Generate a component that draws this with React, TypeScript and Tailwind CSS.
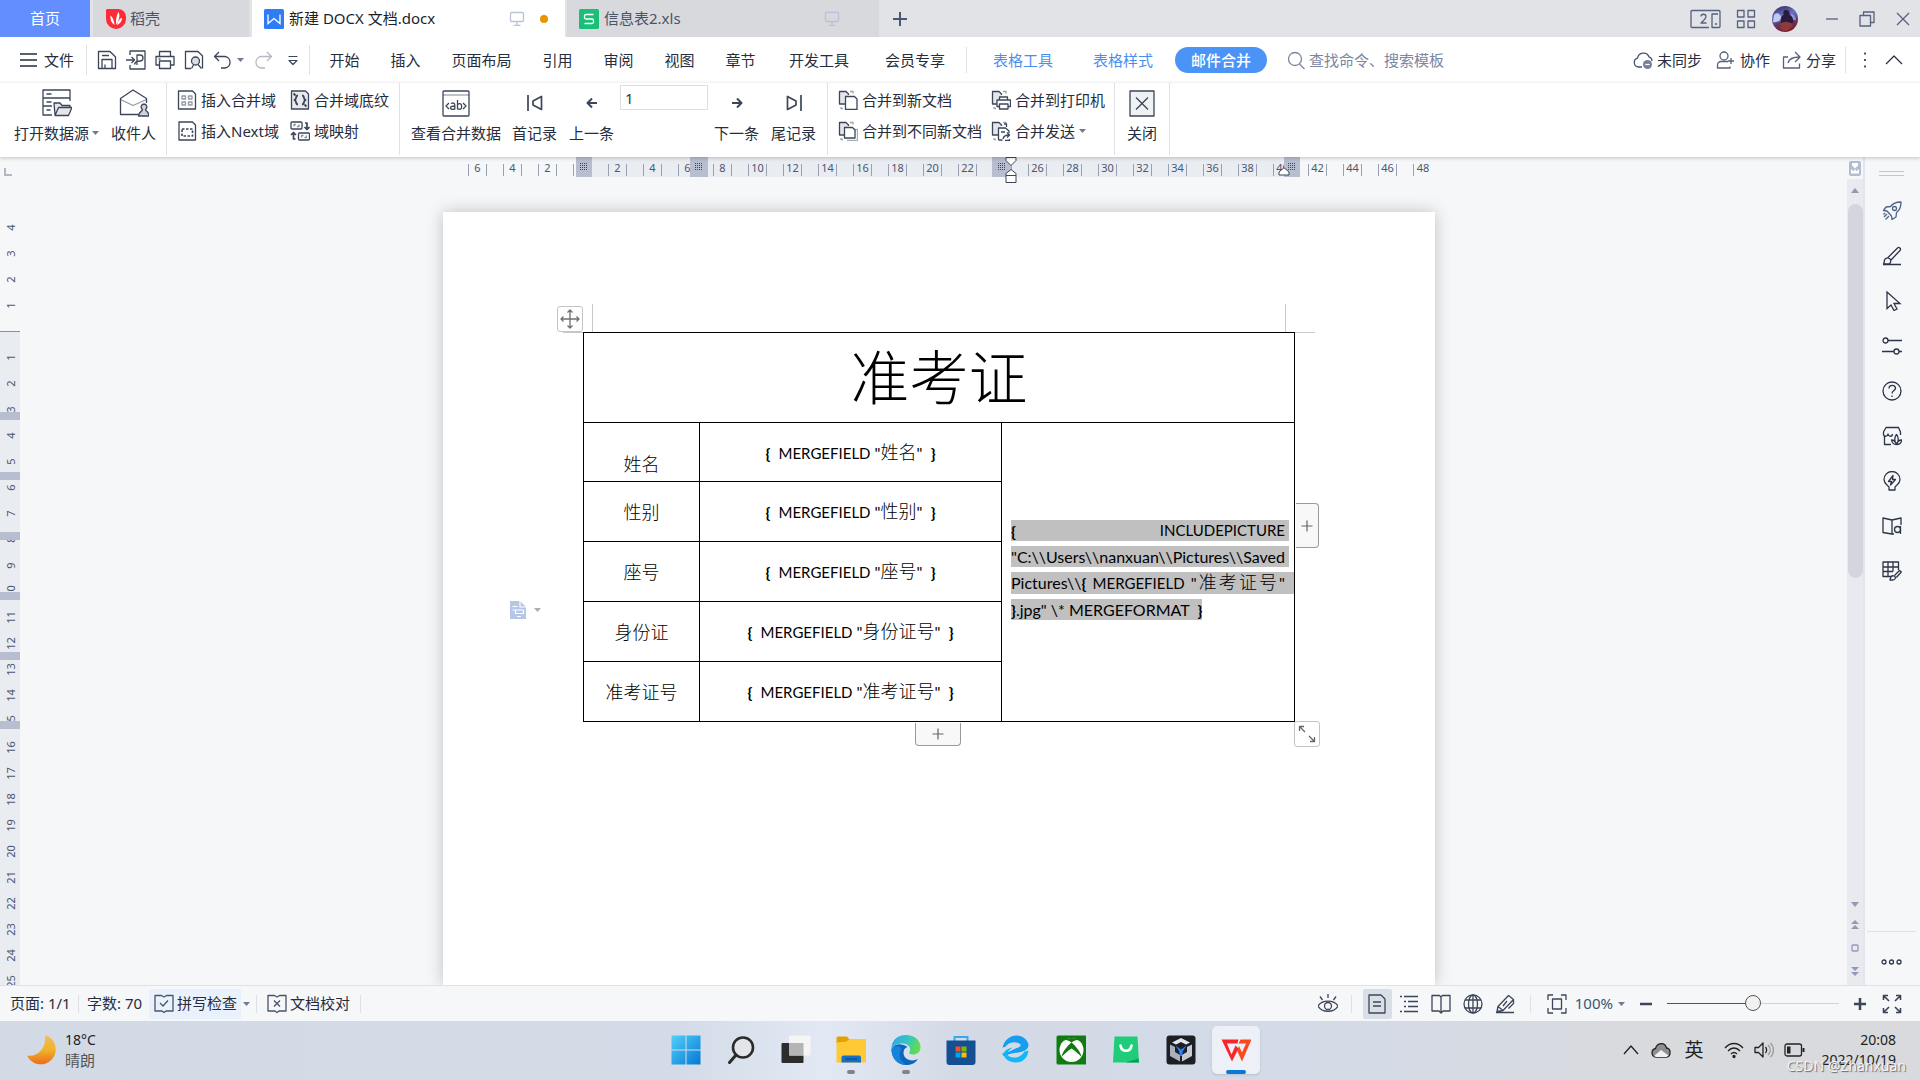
import type { ReactNode } from "react";
import clsx from "clsx";

type SvgProps = {
  size?: number;
  width?: number;
  height?: number;
  box?: string;
  stroke?: number;
  className?: string;
  children: ReactNode;
};

// Thin outlined icon on a 20x20 grid by default.
function Svg({
  size = 20,
  width,
  height,
  box = "0 0 20 20",
  stroke = 1.3,
  className = "",
  children,
}: SvgProps) {
  return (
    <svg
      width={width ?? size}
      height={height ?? size}
      viewBox={box}
      fill="none"
      stroke="currentColor"
      strokeWidth={stroke}
      strokeLinejoin="round"
      className={clsx("shrink-0", className)}
      aria-hidden="true"
    >
      {children}
    </svg>
  );
}

function Caret({ className = "" }: { className?: string }) {
  return (
    <svg width="7" height="4" viewBox="0 0 7 4" className={clsx("shrink-0 text-[#6f7b94]", className)} aria-hidden="true">
      <path d="M0 0h7L3.5 4z" fill="currentColor" />
    </svg>
  );
}

function Divider({ className = "" }: { className?: string }) {
  return <span className={clsx("w-px shrink-0 bg-[#dfe1e6]", className)} />;
}

/* ---------- title bar ---------- */

const MonitorIcon = () => (
  <Svg size={16} box="0 0 16 16" className="text-[#b9c2d8]">
    <rect x="1.5" y="1.5" width="13" height="9" rx="1" />
    <path d="M8 10.5v3.5M4.5 14.3h7" />
  </Svg>
);

function TitleBar() {
  return (
    <header className="flex h-[37px] shrink-0 bg-[#e2e3e7] text-[15px]">
      <button className="w-[90px] bg-[#628eff] text-white">首页</button>
      <button className="ml-[3px] flex w-[156px] items-center bg-[#d8d9dd] pl-[13px] text-[#4b5368]">
        <Svg size={20} stroke={0}>
          <path d="M1 0h11a8 8 0 0 1 8 8v2a10 10 0 0 1-10 10A10 10 0 0 1 0 10V1z" fill="#fb2c36" />
          <path d="M12.5 3c2 4 .5 8-2.5 13 0-5 0-9 2.5-13zM4.5 6.5c2.500 2 3.500 5 4 9.500-3-2-4.500-5-4-9.500zM16 8.500c0 4-2 6-5 7.500.5-3 2-5.500 5-7.500z" fill="#fff" />
        </Svg>
        <span className="ml-1">稻壳</span>
      </button>
      <button className="ml-[3px] flex w-[313px] items-center bg-white px-3 text-[#1a1f2b]">
        <Svg size={20}>
          <rect width="20" height="20" rx="1.5" fill="#2f7df6" stroke="none" />
          <path d="M4 5.500v9l6-5 6 5v-9" stroke="#fff" strokeLinejoin="miter" />
        </Svg>
        <span className="ml-[5px]">新建 DOCX 文档.docx</span>
        <span className="ml-auto flex items-center gap-[15px] pr-[5px]">
          <MonitorIcon />
          <span className="size-2 rounded-full bg-[#e99700]" />
        </span>
      </button>
      <button className="ml-[2px] flex w-[312px] items-center bg-[#d8d9dd] px-3 text-[#4b5368]">
        <Svg size={20}>
          <rect width="20" height="20" rx="1.5" fill="#19bf78" stroke="none" />
          <path d="M14.500 5.500H7a1.500 1.500 0 0 0-1.500 1.500v1.500A1.500 1.500 0 0 0 7 10h6a1.500 1.500 0 0 1 1.500 1.500V13a1.500 1.500 0 0 1-1.500 1.500H5.500" stroke="#fff" />
        </Svg>
        <span className="ml-[5px]">信息表2.xls</span>
        <span className="ml-auto pr-[27px]">
          <MonitorIcon />
        </span>
      </button>
      <button className="ml-[13px] text-[#4a5674]" aria-label="新建标签">
        <Svg size={16} box="0 0 16 16" stroke={2}>
          <path d="M8 1v14M1 8h14" />
        </Svg>
      </button>

      <div className="ml-auto flex items-center pr-[10px] text-[#56617d]">
        <button aria-label="多屏">
          <Svg width={31} height={20} box="0 0 31 20">
            <path d="M19 18.500H2a1 1 0 0 1-1-1V2.500a1 1 0 0 1 1-1h27a1 1 0 0 1 1 1v15a1 1 0 0 1-1 1h-7V5h6" />
            <path d="M11 7.500c0-3 5-3 5 0 0 2-2.500 4-5 6.500h5.500M25 15h2" />
          </Svg>
        </button>
        <button className="ml-[15px]" aria-label="应用">
          <Svg size={20}>
            <rect x="1.5" y="1.5" width="6.5" height="6.5" />
            <rect x="12" y="1.5" width="6.5" height="6.5" />
            <rect x="1.5" y="12" width="6.5" height="6.5" />
            <rect x="12" y="12" width="6.5" height="6.5" />
          </Svg>
        </button>
        <button className="ml-4" aria-label="账号">
          <svg width="26" height="26" viewBox="0 0 26 26" aria-hidden="true">
            <defs>
              <linearGradient id="sky" x1="0" y1="0" x2="0.3" y2="1">
                <stop offset="0" stopColor="#2c2450" />
                <stop offset="0.45" stopColor="#6a73c9" />
                <stop offset="0.7" stopColor="#5a3b72" />
                <stop offset="1" stopColor="#7d1f2a" />
              </linearGradient>
            </defs>
            <circle cx="13" cy="13" r="13" fill="url(#sky)" />
            <path d="M2 9c2-3 6-2 7 2 0 4-4 6-8 5z" fill="#d5e4ff" opacity=".8" />
            <path d="M19 8c3 0 5 3 5 6-2 1-4-1-5-3z" fill="#9fb4f0" opacity=".7" />
            <path d="M14 4c3 0 4 2 3.500 5 3 1 4 4 3.500 8H9c0-4 0-7 2.500-8C11 6 11.500 4 14 4z" fill="#2a1a3c" />
            <path d="M8 18c4-3 9-3 13 1-2 4-6 6-9 6-3-1-4-4-4-7z" fill="#8d3a3c" />
          </svg>
        </button>
        <Divider className="ml-3 h-6 bg-[#cfd2d9]" />
        <button className="ml-[14px]" aria-label="最小化">
          <Svg size={14} box="0 0 14 14"><path d="M1 7h12" /></Svg>
        </button>
        <button className="ml-5" aria-label="还原">
          <Svg size={16} box="0 0 16 16">
            <rect x="1" y="4.5" width="10.5" height="10.5" />
            <path d="M4.500 4.500V1H15v10.500h-3.500" />
          </Svg>
        </button>
        <button className="ml-[21px]" aria-label="关闭窗口">
          <Svg size={14} box="0 0 14 14"><path d="M1 1l12 12M13 1L1 13" /></Svg>
        </button>
      </div>
    </header>
  );
}

/* ---------- menu row ---------- */

const MENU_TABS = [
  { label: "开始", width: "w-[61px]" },
  { label: "插入", width: "w-[61px]" },
  { label: "页面布局", width: "w-[91px]" },
  { label: "引用", width: "w-[61px]" },
  { label: "审阅", width: "w-[61px]" },
  { label: "视图", width: "w-[61px]" },
  { label: "章节", width: "w-[61px]" },
  { label: "开发工具", width: "w-[96px]" },
  { label: "会员专享", width: "w-[96px]" },
];

const QUICK_ACTIONS = [
  {
    label: "保存",
    icon: (
      <>
        <path d="M1.500 1.500H13l5.500 5.500v11.500h-17z" />
        <path d="M5 18.500v-9h10v9M5 5.500h7" />
        <path d="M8 18.500v-4" />
      </>
    ),
  },
  {
    label: "输出为PDF",
    icon: (
      <>
        <path d="M4 5V1h15v18H4v-4" />
        <path d="M0 10h8M5.500 7l3 3-3 3" />
        <path d="M11 15V5h3a2.800 2.800 0 0 1 0 6c-3 0-5 1-5.500 3.500" />
      </>
    ),
  },
  {
    label: "打印",
    icon: (
      <>
        <path d="M4.500 6V1.500h11V6" />
        <path d="M4.500 15H1V6.500h18V15h-3.500" />
        <rect x="4.5" y="11" width="11" height="7.5" />
        <path d="M3.500 9h2" />
      </>
    ),
  },
  {
    label: "打印预览",
    icon: (
      <>
        <path d="M7 18.500H1.500v-17H14l4.500 4.500v12.500" />
        <circle cx="11.5" cy="11" r="4" fill="#d9dde5" />
        <path d="M9.500 15l-2 3.500M14 14.500l3.500 4" />
      </>
    ),
  },
];

function MenuBar() {
  return (
    <nav className="flex h-[46px] shrink-0 items-center bg-white text-[15px] text-[#262d3d]">
      <button className="ml-5 flex w-[66px] items-center">
        <Svg width={17} height={14} box="0 0 17 14"><path d="M0 1h17M0 7h17M0 13h17" /></Svg>
        <span className="ml-[7px]">文件</span>
      </button>
      <Divider className="h-[30px]" />
      <div className="ml-[10px] flex items-center gap-[9px] text-[#3d4659]">
        {QUICK_ACTIONS.map(({ label, icon }) => (
          <button key={label} aria-label={label}>
            <Svg>{icon}</Svg>
          </button>
        ))}
        <button className="flex items-center gap-1" aria-label="撤销">
          <Svg>
            <path d="M6 2L1.500 6.500 6 11M2 6.500h10a5.800 5.800 0 0 1 0 11.500H8" />
          </Svg>
          <Caret />
        </button>
        <button className="text-[#b4b9c4]" aria-label="恢复">
          <Svg>
            <path d="M14 2l4.500 4.500L14 11M18 6.500H8A5.800 5.800 0 0 0 8 18h4" />
          </Svg>
        </button>
        <button className="ml-1" aria-label="更多">
          <Svg size={14} box="0 0 14 14" stroke={1.2}><path d="M2.500 3.500h9M3 7.500h8L7 11.500z" /></Svg>
        </button>
      </div>
      <Divider className="ml-[9px] h-[30px]" />
      <div className="ml-1 flex">
        {MENU_TABS.map(({ label, width }) => (
          <button key={label} className={width}>{label}</button>
        ))}
      </div>
      <Divider className="ml-[3px] h-[26px]" />
      <button className="ml-[6px] w-[100px] text-[#4a8ff0]">表格工具</button>
      <button className="w-[100px] text-[#4a8ff0]">表格样式</button>
      <button className="ml-[2px] h-[26px] w-[92px] rounded-full bg-[#4b93f7] font-medium text-white">邮件合并</button>
      <label className="ml-5 flex items-center text-[#7b86a0]">
        <Svg size={19} box="0 0 19 19">
          <circle cx="8" cy="8" r="6.5" />
          <path d="M12.500 13l5 5" />
        </Svg>
        <input
          className="ml-[3px] w-40 bg-transparent outline-none placeholder:text-[#7b86a0]"
          placeholder="查找命令、搜索模板"
          aria-label="查找命令"
        />
      </label>

      <div className="ml-auto flex items-center pr-[17px] text-[#262d3d]">
        <button className="flex items-center gap-1">
          <Svg className="text-[#48536c]">
            <path d="M9 17H5.500a4.500 4.500 0 0 1-1-8.800A6 6 0 0 1 16 6.800a4.500 4.500 0 0 1 3 4.200" />
            <circle cx="14.5" cy="14.5" r="4.5" fill="#74809b" stroke="none" />
            <path d="M12.300 14.500h4.400" stroke="#fff" />
          </Svg>
          未同步
        </button>
        <button className="ml-[14px] flex items-center gap-1">
          <Svg className="text-[#56617d]">
            <circle cx="8" cy="6" r="4" />
            <path d="M12 11.500H5A3.500 3.500 0 0 0 1.500 15v3H14v-1.500M15 8v6M12 11h6" />
          </Svg>
          协作
        </button>
        <button className="ml-3 flex items-center gap-1">
          <Svg className="text-[#56617d]">
            <path d="M13 2l5 5-5 5M17.500 7C11 7 7 9 6 13M6 7H1.500v11h16v-4.500" />
          </Svg>
          分享
        </button>
        <Divider className="ml-[9px] h-[26px]" />
        <button className="ml-[17px]" aria-label="更多选项">
          <Svg width={4} height={18} box="0 0 4 18" stroke={0}>
            <path d="M1 1.500h2v2H1zM1 8h2v2H1zM1 14.500h2v2H1z" fill="#48536c" />
          </Svg>
        </button>
        <button className="ml-[18px]" aria-label="折叠功能区">
          <Svg width={18} height={10} box="0 0 18 10" stroke={1.2}><path d="M1 9l8-8 8 8" /></Svg>
        </button>
      </div>
    </nav>
  );
}

/* ---------- ribbon ---------- */

function BigButton({ label, icon, caret = false }: { label: string; icon: ReactNode; caret?: boolean }) {
  return (
    <button className="flex flex-col items-center">
      <span className="flex h-10 items-center justify-center text-[#3d4659]">{icon}</span>
      <span className="flex h-5 items-center gap-[3px] whitespace-nowrap">
        {label}
        {caret && <Caret />}
      </span>
    </button>
  );
}

function RowButton({ label, icon, caret = false }: { label: string; icon: ReactNode; caret?: boolean }) {
  return (
    <button className="flex h-[30px] items-center gap-1 whitespace-nowrap">
      <Svg className="text-[#3d4659]">{icon}</Svg>
      {label}
      {caret && <Caret />}
    </button>
  );
}

const pageStack = (
  <>
    <path d="M7 14H1.500V1.500H8l2.500 2.500V5" fill="#e4e6eb" />
    <path d="M12 1.500h3v2M3 17v1.500h2" opacity=".5" />
  </>
);

function Ribbon() {
  return (
    <section className="relative z-10 flex h-[74px] shrink-0 bg-white text-[15px] text-[#262d3d] shadow-[0_1px_4px_rgba(0,0,0,0.22)]">
      <div className="flex gap-3 pl-[14px]">
        <BigButton
          label="打开数据源"
          caret
          icon={
            <Svg width={30} height={28} box="0 0 30 28">
              <path d="M10 26H1V1h27v11M1 9h27M1 17h9M4.500 5h5M4.500 13h5M4.500 21h4" />
              <path d="M13 26l-1-12h6l2 2.500h8V19M13 26.500l3.500-8H30l-3.500 8z" fill="#e4e6eb" />
            </Svg>
          }
        />
        <BigButton
          label="收件人"
          icon={
            <Svg width={30} height={28} box="0 0 30 28">
              <path d="M20 25.500H1.500V9.500L14 1l13.500 8.500V14" />
              <path d="M1.500 10.500l12.500 6 13.500-6" opacity=".55" />
              <path d="M25 15a3 3 0 0 0-1.500 5.500c0 2-4 2-4 6.500h10.500c0-4.500-3.500-4.500-3.500-6.500A3 3 0 0 0 25 15z" fill="#cfd3db" />
            </Svg>
          }
        />
      </div>
      <Divider className="ml-[10px] h-[72px]" />
      <div className="ml-[10px] grid grid-cols-[113px_99px] content-start gap-y-[1px] pt-[2px]">
        <RowButton
          label="插入合并域"
          icon={
            <>
              <path d="M1.500 1h14l3 3v15h-17z" />
              <path d="M5 6h3.500v3H5zM11.500 6H15v3h-3.500zM5 12h3.500v3H5zM11.500 12H15v3h-3.500z" opacity=".55" />
            </>
          }
        />
        <RowButton
          label="合并域底纹"
          icon={
            <>
              <path d="M1.500 1h14l3 3v15h-17z" fill="#e8eaee" />
              <path d="M8 5.500C5 5.500 7 9.500 4.500 10 7 10.500 5 14.500 8 14.500M12 5.500c3 0 1 4 3.500 4.500-2.500.5-.5 4.500-3.500 4.500M3.500 3.500l2 2M14.500 14.500l2 2" strokeWidth="1.8" />
            </>
          }
        />
        <RowButton
          label="插入Next域"
          icon={
            <>
              <path d="M2 1h13.500l3 3v15H2z" />
              <rect x="5" y="8" width="10.5" height="7" strokeDasharray="2.5 1.5" strokeWidth="1.6" />
            </>
          }
        />
        <RowButton
          label="域映射"
          icon={
            <>
              <rect x="1" y="1" width="11" height="7" rx="1" />
              <rect x="8.5" y="12" width="11" height="7" rx="1" />
              <path d="M4 5.500V3.500h2M9 3.500v2H7M11.500 16.500v-2h2M16.500 14.500v2h-2" opacity=".6" />
              <path d="M15 2h2v6M14.500 6L17 8.500 19.500 6M5.500 18h-2v-6M1 14l2.500-2.500L6 14" strokeWidth="1.7" />
            </>
          }
        />
      </div>
      <Divider className="ml-[10px] h-[72px]" />
      <div className="flex pl-[11px]">
        <BigButton
          label="查看合并数据"
          icon={
            <Svg width={28} height={27} box="0 0 28 27">
              <rect x="1" y="1" width="26" height="25" rx="1" />
              <path d="M1 5h26" opacity=".5" />
              <path d="M7 13l-3 3 3 3M21 13l3 3-3 3" />
              <path d="M9 13.500c3-1.200 3.800 0 3.800 1.500v4.500M12.800 16c-4 0-4.300 1.200-4.300 2s2.500 2.500 4.300.5M15.500 10v9.500M15.500 15c1-2 4.200-2 4.200 1.500s-3.200 3.500-4.200 1.500" />
            </Svg>
          }
        />
        <span className="w-[11px]" />
        <BigButton
          label="首记录"
          icon={
            <Svg size={18} box="0 0 18 18" stroke={1.7}>
              <path d="M2 1v16M15.500 2.500v13L7 11V7z" />
            </Svg>
          }
        />
        <span className="w-3" />
        <BigButton
          label="上一条"
          icon={<Svg size={14} box="0 0 14 14" stroke={2}><path d="M12 7H3M7 2.500L2.500 7 7 11.500" /></Svg>}
        />
        <input
          className="mx-[6px] mt-[2px] h-[25px] w-[88px] border border-[#dcdee3] pl-1 text-[#30384a] outline-none"
          defaultValue="1"
          aria-label="记录编号"
        />
        <BigButton
          label="下一条"
          icon={<Svg size={14} box="0 0 14 14" stroke={2}><path d="M2 7h9M7 2.500L11.500 7 7 11.500" /></Svg>}
        />
        <span className="w-3" />
        <BigButton
          label="尾记录"
          icon={
            <Svg size={18} box="0 0 18 18" stroke={1.7}>
              <path d="M16 1v16M2.500 2.500v13L11 11V7z" />
            </Svg>
          }
        />
      </div>
      <Divider className="ml-[11px] h-[72px]" />
      <div className="ml-[10px] grid grid-cols-[153px_114px] content-start gap-y-[1px] pt-[2px]">
        <RowButton label="合并到新文档" icon={<>{pageStack}<path d="M7.500 6.500h9l2.500 2.500v10.500H7.500z" fill="#fff" /></>} />
        <RowButton
          label="合并到打印机"
          icon={
            <>
              {pageStack}
              <path d="M8.500 10V7h8v3M8 16.500H6V10h13.500v6.500H17" fill="#fff" />
              <rect x="8.5" y="14" width="8.5" height="5" fill="#fff" />
            </>
          }
        />
        <RowButton
          label="合并到不同新文档"
          icon={
            <>
              {pageStack}
              <path d="M9 8.500h10.500V19.500H9" opacity=".45" />
              <path d="M6.500 6.500h8L17 9v8H6.500z" fill="#fff" />
            </>
          }
        />
        <RowButton
          label="合并发送"
          caret
          icon={
            <>
              {pageStack}
              <path d="M13 3h2.500v3M7.500 19V7h7l3.500 3v2M7.500 19h4M10 11h4" fill="#fff" />
              <path d="M12 18c.5-3 3-4 6-4M16 11.500l2.500 2.500L16 16.500M18.500 18v1.500H14" />
            </>
          }
        />
      </div>
      <Divider className="ml-[9px] h-[72px]" />
      <div className="px-3">
        <BigButton
          label="关闭"
          icon={
            <Svg width={26} height={27} box="0 0 26 27">
              <rect x="1" y="1" width="24" height="25" fill="#f0f1f3" />
              <path d="M7 7.500l12 12M19 7.500l-12 12" />
            </Svg>
          }
        />
      </div>
      <Divider className="h-[72px]" />
    </section>
  );
}

/* ---------- rulers ---------- */

const H_MARKS = [6, 4, 2, 0, ...Array.from({ length: 24 }, (_, i) => (i + 1) * 2)];

// Column boundary markers on the ruler, measured from the page's left edge.
const H_BLOCKS = [
  { left: 133, width: 16 },
  { left: 247, width: 18 },
  { left: 549, width: 19 },
  { left: 841, width: 16 },
];

// Row boundary markers, measured from the top margin.
const V_BLOCKS = [80, 140, 200, 260, 320, 389];

function DotGrid() {
  return (
    <svg width="8" height="8" viewBox="0 0 8 8" aria-hidden="true">
      {[0, 2, 4, 6].map((y) =>
        [0, 2, 4, 6].map((x) => <rect key={`${x}-${y}`} x={x} y={y} width="1" height="1" fill="#3d4659" />),
      )}
    </svg>
  );
}

function HorizontalRuler() {
  return (
    <div className="flex h-5 shrink-0">
      <Svg size={8} box="0 0 8 8" stroke={2} className="mt-[11px] ml-1 text-[#b3b9c4]">
        <path d="M1 0v7h7" strokeLinejoin="miter" />
      </Svg>
      <div className="flex flex-1 justify-center pl-[19px]">
        <div className="relative flex w-[992px] pl-[17px] text-[11px] text-[#4b5671]">
          <span className="absolute top-0 left-[133px] h-5 w-[724px] bg-[#e9ecf1]" />
          {H_MARKS.map((n, i) => (
            <span key={i} className="relative flex w-[35px] shrink-0 justify-center pt-[7px]">
              <span
                className={clsx(
                  "flex h-3 w-[19px] items-start justify-center border-l border-[#98a1b4] leading-[7px]",
                  n !== 48 && "border-r",
                )}
              >
                {n || ""}
              </span>
            </span>
          ))}
          {H_BLOCKS.map((b) => (
            <span
              key={b.left}
              className="absolute top-0 flex h-5 items-center justify-center bg-[#b7bed0]"
              style={{ left: b.left, width: b.width }}
            >
              <DotGrid />
            </span>
          ))}
          <svg width="12" height="26" viewBox="0 0 12 26" className="absolute top-0 left-[562px] text-[#3d4659]" aria-hidden="true">
            <path d="M1 .500h10v3L6 8.500 1 3.500zM6 12.500l5 4v2H1v-2zM1 18.500h10v7H1z" fill="#fff" stroke="currentColor" />
          </svg>
          <svg width="12" height="9" viewBox="0 0 12 9" className="absolute top-[10px] left-[835px] text-[#3d4659]" aria-hidden="true">
            <path d="M6 .700l5 4.300v3H1V5z" fill="#fff" stroke="currentColor" />
          </svg>
        </div>
      </div>
    </div>
  );
}

function VerticalMark({ n }: { n: number }) {
  return (
    <span className="flex h-[26px] shrink-0 items-center justify-center">
      <span className="-rotate-90">{n}</span>
    </span>
  );
}

function VerticalRuler() {
  return (
    <div className="flex w-5 shrink-0 flex-col overflow-hidden pt-[37px] text-[11px] leading-[11px] text-[#4b5671]">
      {[4, 3, 2, 1].map((n) => (
        <VerticalMark key={n} n={n} />
      ))}
      <div className="relative mt-[13px] flex min-h-0 flex-1 flex-col border-t border-[#8590a8] bg-[#e9ecf1] pt-3">
        {Array.from({ length: 25 }, (_, i) => (
          <VerticalMark key={i} n={i + 1} />
        ))}
        {V_BLOCKS.map((top) => (
          <span key={top} className="absolute left-0 h-2 w-5 bg-[#b7bed0]" style={{ top }} />
        ))}
      </div>
    </div>
  );
}

/* ---------- document ---------- */

const FIELDS = [
  { label: "姓名", field: "姓名" },
  { label: "性别", field: "性别" },
  { label: "座号", field: "座号" },
  { label: "身份证", field: "身份证号" },
  { label: "准考证号", field: "准考证号" },
];

function MergeField({ name }: { name: string }) {
  return (
    <span className="whitespace-pre">
      <b>{"{"}</b>
      {"  "}
      <span className="text-[15px]">MERGEFIELD</span> &quot;
      <span className="text-[18px] font-light">{name}</span>&quot;{"  "}
      <b>{"}"}</b>
    </span>
  );
}

function AdmissionTable() {
  return (
    <table className="w-[712px] table-fixed border-collapse text-center text-[16px] leading-[22px] text-black">
      <colgroup>
        <col className="w-[116px]" />
        <col className="w-[302px]" />
        <col />
      </colgroup>
      <tbody>
        <tr className="h-[90px]">
          <th colSpan={3} className="border border-black text-[59px] leading-[70px] font-light">
            准考证
          </th>
        </tr>
        {FIELDS.map(({ label, field }, i) => (
          <tr key={label} className={i === 0 ? "h-[59px]" : "h-[60px]"}>
            <td className={clsx("border border-black text-[18px] font-light", i === 0 && "pt-6")}>{label}</td>
            <td className="border border-black">
              <MergeField name={field} />
            </td>
            {i === 0 && (
              <td rowSpan={5} className="border border-black pb-1 pl-[9px] text-left">
                <div className="flex flex-col items-start gap-[5px] leading-[21px]">
                  <span className="flex w-[278px] justify-between bg-[#c0c0c0] pr-1">
                    <b>{"{"}</b>
                    <span className="text-[15px]">INCLUDEPICTURE</span>
                  </span>
                  <span className="w-[278px] bg-[#c0c0c0]">&quot;C:\\Users\\nanxuan\\Pictures\\Saved</span>
                  <span className="w-full bg-[#c0c0c0] pr-[9px] [text-align-last:justify]">
                    Pictures\\<b>{"{"}</b> <span className="text-[15px]">MERGEFIELD</span> &quot;
                    <span className="text-[18px] font-light">准考证号</span>&quot;
                  </span>
                  <span className="bg-[#c0c0c0] whitespace-pre">
                    <b>{"}"}</b>.jpg&quot; \* MERGEFORMAT{"  "}
                    <b>{"}"}</b>
                  </span>
                </div>
              </td>
            )}
          </tr>
        ))}
      </tbody>
    </table>
  );
}

function PlusMark() {
  return (
    <Svg size={12} box="0 0 12 12" stroke={1.2}>
      <path d="M6 .500v11M.500 6h11" />
    </Svg>
  );
}

function DocumentPage() {
  return (
    <div className="w-[992px] shrink-0 bg-white pt-[120px] pl-[140px] shadow-[0_0_16px_rgba(0,0,0,0.22)]">
      <div className="relative w-[712px] font-['Lato','Noto_Sans_CJK_SC',sans-serif]">
        <AdmissionTable />

        {/* margin corners */}
        <span className="absolute -top-[28px] left-[9px] h-[28px] w-px bg-[#c9c9c9]" />
        <span className="absolute -top-[28px] right-[9px] h-[28px] w-px bg-[#c9c9c9]" />
        <span className="absolute top-0 -left-5 h-px w-5 bg-[#c9c9c9]" />
        <span className="absolute top-0 -right-5 h-px w-5 bg-[#c9c9c9]" />

        {/* table handles */}
        <button className="absolute -top-[26px] -left-[26px] flex size-[26px] items-center justify-center rounded-[3px] border border-[#c4c4c4] bg-white text-[#707070]" aria-label="移动表格">
          <Svg size={20}>
            <path d="M10 1v18M1 10h18M7.500 3.500L10 1l2.500 2.500M7.500 16.500L10 19l2.500-2.500M3.500 7.500L1 10l2.500 2.500M16.500 7.500L19 10l-2.500 2.500" />
          </Svg>
        </button>
        <button className="absolute top-[171px] -right-[24px] flex h-[45px] w-[23px] items-center justify-center rounded-r-[4px] border border-l-0 border-[#9a9a9a] bg-[#f8f8f8] text-[#666]" aria-label="添加列">
          <PlusMark />
        </button>
        <button className="absolute top-[391px] left-[332px] flex h-[23px] w-[46px] items-center justify-center rounded-b-[4px] border border-t-0 border-[#9a9a9a] bg-[#f8f8f8] text-[#666]" aria-label="添加行">
          <PlusMark />
        </button>
        <button className="absolute top-[389px] -right-[25px] flex size-[26px] items-center justify-center rounded-[3px] border border-[#c4c4c4] bg-white text-[#666]" aria-label="缩放表格">
          <Svg size={18} box="0 0 18 18">
            <path d="M1.500 6V1.500H6M1.500 1.500L7 7M16.500 12v4.500H12M16.500 16.500L11 11" />
          </Svg>
        </button>
        <button className="absolute top-[269px] -left-[73px] flex items-center gap-2" aria-label="段落布局">
          <Svg width={16} height={18} box="0 0 16 18" stroke={1.2}>
            <path d="M0 0h10l6 6v12H0z" fill="#b5c6e6" stroke="none" />
            <path d="M10 0v6h6M2.500 5.500h5M2.500 9h11v3.500h-8V9M7 15.500h4" stroke="#fff" />
          </Svg>
          <Caret className="text-[#a9adb5]" />
        </button>
      </div>
    </div>
  );
}

/* ---------- scroll bar and side panel ---------- */

function ScrollColumn() {
  return (
    <div className="flex w-4 shrink-0 flex-col items-center text-[#8f9ab5]">
      <div className="flex h-[22px] shrink-0 items-center">
        <Svg width={12} height={15} box="0 0 12 15" stroke={0}>
          <rect width="12" height="15" rx="2" fill="#b3bcd2" />
          <path d="M3 2h6v2.500L6 7.500l-3-3zM2 8.500h1.500V10h1.700V8.500h1.600V10h1.700V8.500H10V12.500H2z" fill="#fff" />
        </Svg>
      </div>
      <div className="flex w-full flex-1 flex-col items-center bg-[#e8eaf0] pb-[9px]">
        <Svg width={8} height={5} box="0 0 8 5" stroke={0} className="mt-[9px]"><path d="M0 5h8L4 0z" fill="currentColor" /></Svg>
        <span className="mt-[11px] h-[374px] w-[15px] rounded-full bg-[#d3d6df]" />
        <Svg width={8} height={5} box="0 0 8 5" stroke={0} className="mt-auto"><path d="M0 0h8L4 5z" fill="currentColor" /></Svg>
        <Svg width={8} height={10} box="0 0 8 10" stroke={0} className="mt-[13px]"><path d="M0 4h8L4 0zM0 9h8L4 5z" fill="currentColor" /></Svg>
        <Svg width={8} height={8} box="0 0 8 8" className="mt-[14px]"><rect x="1" y="1" width="6" height="6" rx="1" /></Svg>
        <Svg width={8} height={10} box="0 0 8 10" stroke={0} className="mt-[14px]"><path d="M0 1h8L4 5zM0 6h8L4 10z" fill="currentColor" /></Svg>
      </div>
    </div>
  );
}

const SIDE_TOOLS = [
  {
    label: "快捷",
    icon: (
      <g stroke="#50628c">
        <path d="M19 1c-5 0-8 1-10.500 4.500L4 6 1.500 9.500 5 10l4.500 5 .5 3.500L14 16l.5-4.500C18 9 19 6 19 1z" />
        <circle cx="12.5" cy="7.5" r="2" />
        <path d="M5 13l-3 3M7 15l-3.500 3.500M3 12l-1.500 1.500" />
      </g>
    ),
  },
  {
    label: "样式",
    icon: <path d="M1 18.500h18M1.500 18c1-1 .5-2 1-4a3.500 3.500 0 0 1 5-1.500c2 1.500 1.500 4.500-.5 5.500zM6 11.500L15.500 2c1.500-1.500 4 .5 2.500 2.500L9 14" />,
  },
  { label: "选择", icon: <path d="M5 1v16.500l4-3.500 3 5.500 3-1.500-3-5.500h6z" strokeLinejoin="miter" /> },
  {
    label: "设置",
    icon: (
      <>
        <circle cx="3.5" cy="4.5" r="2.5" />
        <circle cx="14.5" cy="15.5" r="2.5" />
        <path d="M6 4.500h14M0 15.500h12M17 15.500h3" />
      </>
    ),
  },
  {
    label: "帮助",
    icon: (
      <>
        <circle cx="10" cy="10" r="9" />
        <path d="M7 7.500c0-4 6.500-4 6.500-.3 0 2.300-3.500 2.500-3.500 5.300M10 14.500v1.500" />
      </>
    ),
  },
  {
    label: "稻壳资源",
    icon: (
      <>
        <path d="M9 18.500H2.500V10M18.500 9V6l-2-4.500H4L1.500 6v2c0 3 4 3 4.500 0 .5 3 4.500 3 4.500 0" />
        <path d="M14.500 8.500c2.500 3 2.500 6 0 10-2.500-4-2.500-7 0-10zM14.500 18.500c-3 0-4.500-1.500-5-4.500 2 0 4 1.500 5 4.500zM14.500 18.500c3 0 5-1.500 5-4.500-2.500 0-4 1.500-5 4.500z" />
      </>
    ),
  },
  {
    label: "灵感",
    icon: (
      <>
        <path d="M7 16c-1-2-5-3-5-7.500a8 8 0 0 1 16 0C18 13 14 14 13 16v3H7z" />
        <path d="M11 4.500L6.500 10.500h3L8.500 14l5-5.500h-3z" />
      </>
    ),
  },
  {
    label: "阅读",
    icon: (
      <>
        <path d="M10 4L1 2v14.500l9 1.500V4l9-2v7M10 18h2" />
        <circle cx="15.5" cy="13.5" r="3" />
        <path d="M18.500 10v8" />
      </>
    ),
  },
  {
    label: "表格美化",
    icon: (
      <>
        <path d="M9 15.500H1V1h15.500v8M1 6h15.500M1 10.500h10M6 1v14.500M11 1v9.500" />
        <path d="M8 19c.5-3 1.500-5 4-4s1.500 4-1.500 4zM12.500 14.500l5-5 1.800 1.500-5 5.500" />
      </>
    ),
  },
];

function SidePanel() {
  return (
    <aside className="flex w-[57px] shrink-0 flex-col items-center border-l-2 border-[#e3e5ea] bg-[#f6f7f9] pr-[2px] text-[#2c3548]">
      <span className="mt-[14px] h-[5px] w-[25px] border-y border-[#c4c7cd]" />
      <div className="mt-[25px] flex flex-col gap-[25px]">
        {SIDE_TOOLS.map(({ label, icon }) => (
          <button key={label} aria-label={label}>
            <Svg>{icon}</Svg>
          </button>
        ))}
      </div>
      <span className="mt-auto h-px w-[49px] bg-[#dfe1e6]" />
      <button className="mt-[27px] mb-5" aria-label="更多工具">
        <Svg width={21} height={6} box="0 0 21 6">
          <circle cx="3" cy="3" r="2" />
          <circle cx="10.5" cy="3" r="2" />
          <circle cx="18" cy="3" r="2" />
        </Svg>
      </button>
    </aside>
  );
}

/* ---------- status bar ---------- */

const BookOutline = () => <path d="M8 17H1V1.500h6.500L10 3l2.500-1.500H19V17h-7l-2 1.500z" />;

const VIEW_MODES = [
  { label: "页面视图", active: true, icon: <path d="M2 1h12l4 4v14H2zM6 8h8M6 12h8" /> },
  { label: "大纲", icon: <path d="M1 2.500h2M5 2.500h14M5 7.500h2M9 7.500h10M5 12.500h2M9 12.500h10M1 17.500h2M5 17.500h14" /> },
  { label: "阅读版式", icon: <path d="M10 3L8.500 1.500H1V17h7l2 2 2-2h7V1.500h-7.500zM10 3v16" /> },
  {
    label: "Web版式",
    icon: (
      <>
        <circle cx="10" cy="10" r="9" />
        <ellipse cx="10" cy="10" rx="4.5" ry="9" />
        <path d="M10 1v18M2 6h16M2 14h16" />
      </>
    ),
  },
  { label: "写作模式", icon: <path d="M1 18.500h18M2 17.500l1-5L13.500 1.500l5 4L8 16.500zM3 12.500l5 4M12 7l-4 5M18.500 5.500v4l-5 5" /> },
];

function StatusBar() {
  return (
    <footer className="flex h-9 shrink-0 items-center border-t border-[#dfe1e6] bg-[#f5f7f9] text-[15px] text-[#262d3d]">
      <span className="ml-[10px] w-[68px]">页面: 1/1</span>
      <Divider className="h-[18px]" />
      <span className="ml-2 w-[62px]">字数: 70</span>
      <button className="flex h-[30px] w-[92px] items-center gap-[3px] bg-[#e9f1fc] pl-[5px] whitespace-nowrap">
        <Svg className="text-[#48536c]">
          <BookOutline />
          <path d="M6 9l3 3 5-5.500" />
        </Svg>
        拼写检查
      </button>
      <Caret className="ml-[2px]" />
      <Divider className="ml-[6px] h-[18px]" />
      <button className="ml-[10px] flex items-center gap-[3px]">
        <Svg className="text-[#48536c]">
          <BookOutline />
          <path d="M7 6.500l6 6M13 6.500l-6 6" />
        </Svg>
        文档校对
      </button>
      <Divider className="ml-[10px] h-[18px]" />

      <div className="ml-auto flex items-center pr-[18px] text-[#3d4659]">
        <button aria-label="护眼模式">
          <Svg>
            <path d="M0 12c4-6.500 16-6.500 20 0-4 7-16 7-20 0z" />
            <circle cx="10" cy="12" r="3.5" />
            <path d="M10 0v4M2 2.500L4.500 6M18 2.500L15.500 6" />
          </Svg>
        </button>
        <Divider className="mr-[11px] ml-[13px] h-[18px]" />
        {VIEW_MODES.map(({ label, active, icon }) => (
          <button
            key={label}
            className={clsx("mr-[3px] flex h-[30px] w-[29px] items-center justify-center", active && "rounded-[2px] bg-[#d9dfe7]")}
            aria-label={label}
          >
            <Svg>{icon}</Svg>
          </button>
        ))}
        <Divider className="ml-[7px] h-[18px]" />
        <button className="ml-4" aria-label="适应页面">
          <Svg>
            <path d="M1 6V1h5M14 1h5v5M19 14v5h-5M6 19H1v-5" />
            <rect x="5.5" y="5" width="9" height="10" />
          </Svg>
        </button>
        <button className="ml-2 flex items-center gap-[5px] text-[#3b5574]">
          100%
          <Caret />
        </button>
        <button className="ml-[14px]" aria-label="缩小">
          <Svg size={14} box="0 0 14 14" stroke={2.5}><path d="M1 7h12" /></Svg>
        </button>
        <input
          type="range"
          defaultValue={50}
          aria-label="显示比例"
          className="ml-[14px] h-5 w-[172px] appearance-none bg-transparent [&::-webkit-slider-runnable-track]:h-px [&::-webkit-slider-runnable-track]:bg-[linear-gradient(90deg,#48536c_50%,#cfd3da_50%)] [&::-webkit-slider-thumb]:-mt-2 [&::-webkit-slider-thumb]:size-4 [&::-webkit-slider-thumb]:appearance-none [&::-webkit-slider-thumb]:rounded-full [&::-webkit-slider-thumb]:border [&::-webkit-slider-thumb]:border-[#555] [&::-webkit-slider-thumb]:bg-[#f2f2f2]"
        />
        <button className="ml-[14px]" aria-label="放大">
          <Svg size={14} box="0 0 14 14" stroke={2.5}><path d="M7 1v12M1 7h12" /></Svg>
        </button>
        <button className="ml-[15px]" aria-label="全屏">
          <Svg size={20} stroke={1.6}>
            <path d="M1.500 6V1.500H6M1.500 1.500L7 7M14 1.500h4.500V6M18.500 1.500L13 7M18.500 14v4.500H14M18.500 18.500L13 13M6 18.500H1.500V14M1.500 18.500L7 13" />
          </Svg>
        </button>
      </div>
    </footer>
  );
}

/* ---------- taskbar ---------- */

const TASKBAR_APPS = [
  {
    label: "开始",
    icon: (
      <>
        <linearGradient id="win" x1="0" y1="0" x2="1" y2="1">
          <stop offset="0" stopColor="#52d1fb" />
          <stop offset="1" stopColor="#0478d4" />
        </linearGradient>
        <path d="M0 0h14v14H0zM15 0h14v14H15zM0 15h14v14H0zM15 15h14v14H15z" fill="url(#win)" />
      </>
    ),
  },
  {
    label: "搜索",
    icon: (
      <>
        <circle cx="16.5" cy="12" r="10" fill="#e3e5ea" stroke="#2b2b2b" strokeWidth="2.6" />
        <path d="M9.500 19.500L3 27" stroke="#2b2b2b" strokeWidth="3" strokeLinecap="round" />
      </>
    ),
  },
  {
    label: "任务视图",
    icon: (
      <>
        <rect x="0" y="7.5" width="22" height="20" rx="1" fill="#2c2c2c" />
        <rect x="7.5" y="0" width="21.5" height="20" rx="1" fill="#f5f5f5" />
        <path d="M7.500 7.500H22V20H7.500z" fill="#b5b5b5" />
      </>
    ),
  },
  {
    label: "文件资源管理器",
    running: true,
    icon: (
      <>
        <path d="M0 2.500A1.500 1.500 0 0 1 1.500 1h9L13 4v4H0z" fill="#e2a100" />
        <path d="M0 7l10-1 3-2.500h16.500V27H0z" fill="#ffc935" />
        <path d="M5 27v-5a2 2 0 0 1 2-2h15.500a2 2 0 0 1 2 2v5z" fill="#1470c4" />
        <path d="M9 23.500h11.500" stroke="#0a4c92" strokeWidth="1.4" />
      </>
    ),
  },
  {
    label: "Edge",
    running: true,
    icon: (
      <>
        <linearGradient id="edgeTop" x1="0" y1="0" x2="1" y2=".3">
          <stop offset="0" stopColor="#2aa6e8" />
          <stop offset=".6" stopColor="#36c6c0" />
          <stop offset="1" stopColor="#5fdc52" />
        </linearGradient>
        <path d="M14.500-.500C5-.500 0 6 0 14s6 15.500 14.500 15.500c5 0 9-1.500 12-6-7 3.500-14.500 0-14.500-6 0-3 1-5 4-6C10 7 2 8 0 14 1 5 7-.500 14.500-.500z" fill="#0c66bd" />
        <path d="M0 14C.500 5 6.500-.500 14.500-.500 23-.500 29 5 29 11.500c0 5-3.500 7.500-7.500 7.500-3 0-4.500-1-3.500-2.500 2-4-1-8.500-7-8.500C5.500 8 1 10 0 14z" fill="url(#edgeTop)" />
        <path d="M0 14c0 9 6 15 14 15-5-3-8-10-4-16C7 10 2 10 0 14z" fill="#1583dc" />
      </>
    ),
  },
  {
    label: "Microsoft Store",
    icon: (
      <>
        <path d="M8 6V1.500h13V6" stroke="#35a8ee" strokeWidth="2" />
        <path d="M0 5h29v21.500a3 3 0 0 1-3 3H3a3 3 0 0 1-3-3z" fill="#134f91" />
        <path d="M9 11h5v5H9z" fill="#f25022" />
        <path d="M15 11h5v5h-5z" fill="#7fba00" />
        <path d="M9 17h5v5H9z" fill="#00a4ef" />
        <path d="M15 17h5v5h-5z" fill="#ffb900" />
      </>
    ),
  },
  {
    label: "浏览器",
    icon: (
      <>
        <path d="M1 12C3 4 9 0 15 0c6 0 11 4 12 9 0 5-4 7-10 8-5 1-9 1-12 3-3 1-4 0-4-2 5-1 9-3 13-5 3-1 6-2 5-4-3-3-10-3-14 1-1 1-2 2-4 2z" fill="#179df0" />
        <path d="M27 15c-1 8-6 12-13 12-6 0-12-4-12-9 1-3 4-5 9-6-2 2-4 3-5 5-1 3 3 5 7 5 5 0 8-3 10-6z" fill="#12b8f6" />
      </>
    ),
  },
  {
    label: "Xbox",
    icon: (
      <>
        <rect width="30" height="29" rx="1.5" fill="#107c10" />
        <circle cx="15" cy="14.5" r="12" fill="#fff" />
        <path d="M15 7c5 4 9 10 10 14-3-4-7-7-10-9-3 2-7 5-10 9 1-4 5-10 10-14zM7 5c3-1.500 5 0 8 2 3-2 5-3.500 8-2-3-3.500-13-3.500-16 0z" fill="#107c10" />
        <path d="M5 21c2-5 6-9 10-11 4 2 8 6 10 11-2-1-6-6-10-8-4 2-8 7-10 8z" fill="#107c10" />
      </>
    ),
  },
  {
    label: "应用市场",
    icon: (
      <>
        <path d="M3 1h23l1.500 26H1.500z" fill="#1fcc78" />
        <path d="M14 27l13-4 .5 4z" fill="#0a9c55" />
        <path d="M9 10c1 7 10 7 11 0" stroke="#fff" strokeWidth="2.6" strokeLinecap="round" />
      </>
    ),
  },
  {
    label: "模型",
    icon: (
      <>
        <rect width="29" height="29" rx="3" fill="#1d1f24" />
        <path d="M14.500 2.500l9 4.500-4 2-5-2.500-5 2.500-4-2z" fill="#e2e5ea" />
        <path d="M3.500 9l5 2.500v5l5 3v6.500l-10-5.500z" fill="#a9b0bb" />
        <path d="M25.500 9l-5 2.500v5l-5 3v6.500l10-5.500z" fill="#c6cbd3" />
        <path d="M9 10l5.500 4 5.500-4-3.500 5.500-1 5h-2l-1-5z" fill="#2f7df0" />
      </>
    ),
  },
  {
    label: "WPS",
    active: true,
    icon: (
      <>
        <path d="M0 4h17l-1 4H5.500L10 19l4-9 3 3-6.500 13z" fill="#f7262c" />
        <path d="M19 4h11l-9.500 22-5-11 2-4.500 3 6.500L24.500 8H17z" fill="#fa4a1c" />
      </>
    ),
  },
];

function Taskbar() {
  return (
    <div className="relative flex h-[59px] shrink-0 items-center bg-[linear-gradient(90deg,#d3dae5_0%,#d2dbe7_35%,#e2e9f4_43%,#d3dae6_50%,#d3dbe8_68%,#d9dade_85%,#d9dadd_100%)] pb-[2px] text-[14px] leading-5 text-[#222]">
      <button className="ml-[26px] flex flex-1 items-center gap-[9px] text-left">
        <svg width="30" height="30" viewBox="0 0 30 30" aria-hidden="true">
          <linearGradient id="moon" x1="0" y1="0" x2="0" y2="1">
            <stop offset="0" stopColor="#f6b95a" />
            <stop offset=".5" stopColor="#f0b429" />
            <stop offset="1" stopColor="#ee6c1c" />
          </linearGradient>
          <path d="M19 0a15 15 0 1 1-18 20.500C12 23 21 12 19 0z" fill="url(#moon)" />
        </svg>
        <span className="flex flex-col">
          <span>18°C</span>
          <span className="text-[15px] text-[#555]">晴朗</span>
        </span>
      </button>

      <div className="flex gap-[7px]">
        {TASKBAR_APPS.map(({ label, icon, running, active }) => (
          <button
            key={label}
            className={clsx(
              "relative flex size-12 items-center justify-center rounded-[5px]",
              active && "bg-[#edf0f6] shadow-sm",
            )}
            aria-label={label}
          >
            <svg width="30" height="30" viewBox="-0.5 -0.5 30 30" fill="none" aria-hidden="true">
              {icon}
            </svg>
            {running && <span className="absolute bottom-0 h-1 w-2 rounded-full bg-[#80848c]" />}
            {active && <span className="absolute bottom-0 h-1 w-5 rounded-full bg-[#0a78d6]" />}
          </button>
        ))}
      </div>

      <div className="flex flex-1 items-center justify-end pr-6">
        <button aria-label="显示隐藏的图标">
          <Svg width={16} height={10} box="0 0 16 10"><path d="M1 9l7-8 7 8" /></Svg>
        </button>
        <button className="ml-3" aria-label="OneDrive">
          <svg width="20" height="16" viewBox="0 0 20 16" aria-hidden="true">
            <path d="M5 15a4.300 4.300 0 0 1-.5-8.500C6 .500 14-.500 15.500 6c5 0 4.500 9 0 9z" fill="#8f8f8f" stroke="#222" strokeWidth="1.3" />
            <path d="M3 14l7-6 7.500 5.500-2 1.500H5z" fill="#f1f1f1" />
          </svg>
        </button>
        <button className="ml-[14px] text-[19px]">英</button>
        <button className="ml-5 flex items-center gap-[10px]" aria-label="网络、音量和电池">
          <Svg>
            <path d="M1 8c5-6 13-6 18 0M4 11c3.500-4 8.500-4 12 0M7 14c2-2 4-2 6 0" />
            <circle cx="10" cy="16.5" r="1" fill="currentColor" />
          </Svg>
          <Svg>
            <path d="M1 7.500h3.500L9 3v14l-4.500-4.500H1zM11.500 7c1.500 2 1.500 4 0 6" />
            <path d="M14 5c3 3 3 7 0 10M16.500 3c4 4 4 10 0 14" opacity=".35" />
          </Svg>
          <Svg width={21} height={14} box="0 0 21 14">
            <rect x="1" y="1" width="16.5" height="12" rx="2" />
            <path d="M3 3.500h3.500v7H3zM18.500 5h2v4h-2z" fill="currentColor" stroke="none" />
          </Svg>
        </button>
        <button className="ml-[17px] flex flex-col items-end">
          <span>20:08</span>
          <span>2022/10/19</span>
        </button>
      </div>
      <span className="absolute right-[14px] bottom-1 text-[14px] leading-5 text-[#f4f4f4] [text-shadow:1px_1px_1px_#666]">
        CSDN @Zhanxuan
      </span>
    </div>
  );
}

export default function App() {
  return (
    <div className="flex h-screen flex-col overflow-hidden bg-[#f5f7f9] font-['Noto_Sans','Noto_Sans_CJK_SC',sans-serif]">
      <TitleBar />
      <MenuBar />
      <Ribbon />
      <main className="flex min-h-0 flex-1">
        <div className="flex min-w-0 flex-1 flex-col">
          <HorizontalRuler />
          <div className="flex min-h-0 flex-1">
            <VerticalRuler />
            <div className="flex flex-1 justify-center overflow-hidden pt-[35px] pl-[11px]">
              <DocumentPage />
            </div>
          </div>
        </div>
        <ScrollColumn />
        <SidePanel />
      </main>
      <StatusBar />
      <Taskbar />
    </div>
  );
}
